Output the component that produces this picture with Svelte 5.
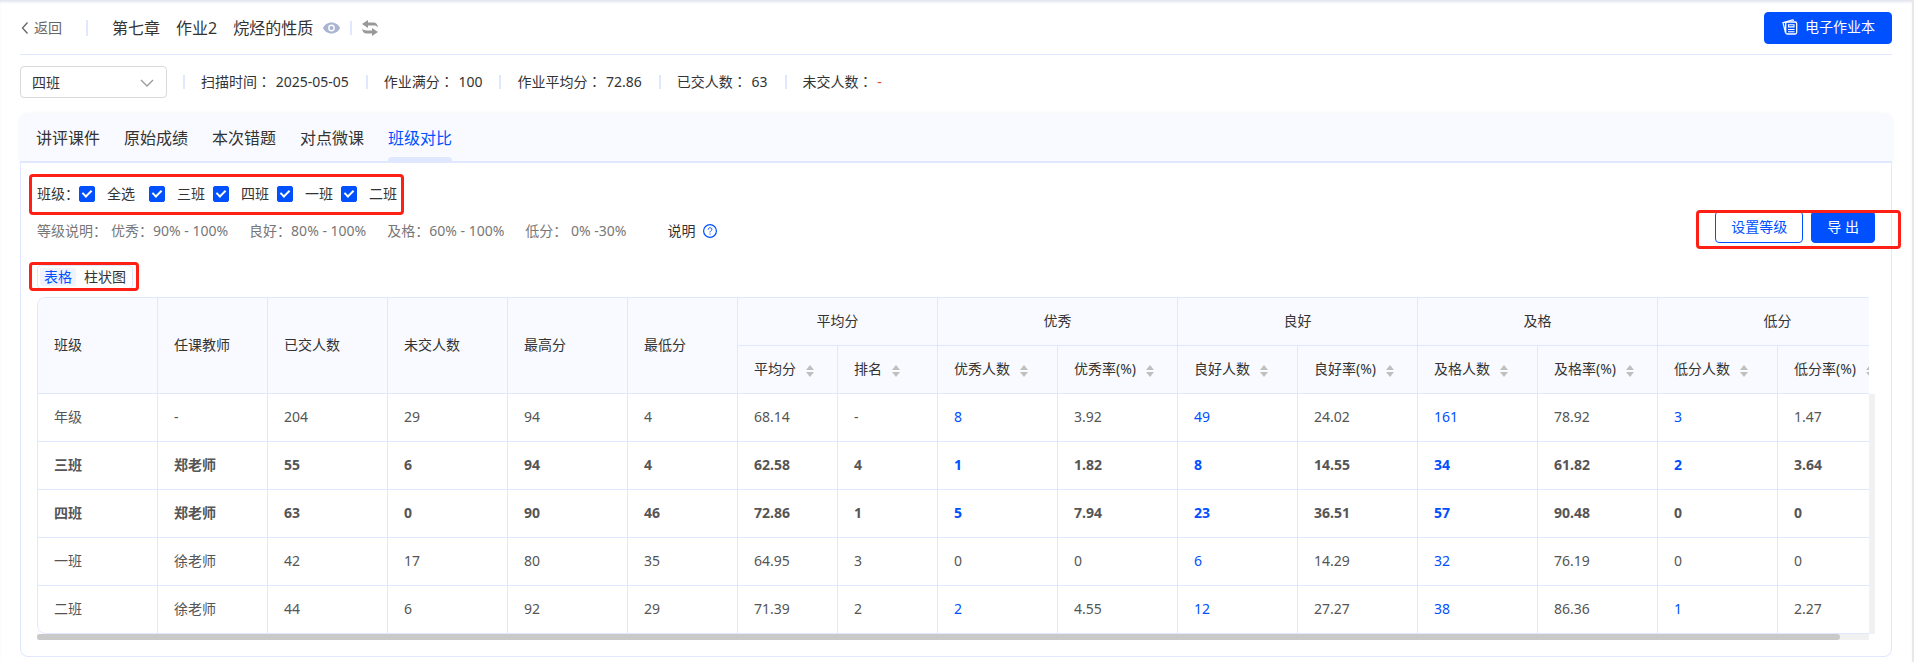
<script lang="ts">
  type Score = {
    name: string;
    teacher: string;
    values: string[];
    bold?: boolean;
  };

  const tabs = ["讲评课件", "原始成绩", "本次错题", "对点微课", "班级对比"];
  let activeTab = $state("班级对比");

  const classNames = ["三班", "四班", "一班", "二班"];
  let currentClass = $state("四班");
  let selected = $state(["三班", "四班", "一班", "二班"]);
  let allSelected = $derived(selected.length == classNames.length);

  let view = $state("表格");

  const info = [
    { label: "扫描时间", value: "2025-05-05" },
    { label: "作业满分", value: "100" },
    { label: "作业平均分", value: "72.86" },
    { label: "已交人数", value: "63" },
    { label: "未交人数", value: "-", warn: true },
  ];

  const levels = [
    "优秀：90% - 100%",
    "良好：80% - 100%",
    "及格：60% - 100%",
    "低分： 0% -30%",
  ];

  const widths = [
    120, 110, 120, 120, 120, 110, 100, 100, 120, 120, 120, 120, 120, 120, 120,
    120,
  ];
  const tableWidth = widths.reduce((sum, w) => sum + w, 1);
  const baseColumns = [
    "班级",
    "任课教师",
    "已交人数",
    "未交人数",
    "最高分",
    "最低分",
  ];
  const groups = [
    { title: "平均分", columns: ["平均分", "排名"] },
    { title: "优秀", columns: ["优秀人数", "优秀率(%)"] },
    { title: "良好", columns: ["良好人数", "良好率(%)"] },
    { title: "及格", columns: ["及格人数", "及格率(%)"] },
    { title: "低分", columns: ["低分人数", "低分率(%)"] },
  ];

  // columns that open the student list when the count is not 0
  const linkColumns = [6, 8, 10, 12];

  const rows: Score[] = [
    {
      name: "年级",
      teacher: "-",
      values: ["204", "29", "94", "4", "68.14", "-", "8", "3.92", "49", "24.02", "161", "78.92", "3", "1.47"],
    },
    {
      name: "三班",
      teacher: "郑老师",
      values: ["55", "6", "94", "4", "62.58", "4", "1", "1.82", "8", "14.55", "34", "61.82", "2", "3.64"],
      bold: true,
    },
    {
      name: "四班",
      teacher: "郑老师",
      values: ["63", "0", "90", "46", "72.86", "1", "5", "7.94", "23", "36.51", "57", "90.48", "0", "0"],
      bold: true,
    },
    {
      name: "一班",
      teacher: "徐老师",
      values: ["42", "17", "80", "35", "64.95", "3", "0", "0", "6", "14.29", "32", "76.19", "0", "0"],
    },
    {
      name: "二班",
      teacher: "徐老师",
      values: ["44", "6", "92", "29", "71.39", "2", "2", "4.55", "12", "27.27", "38", "86.36", "1", "2.27"],
    },
  ];

  let viewport = $state(0);
  let thumb = $derived(Math.min(100, (viewport / tableWidth) * 100));

  function toggleAll() {
    selected = allSelected ? [] : [...classNames];
  }
</script>

<div class="page">
  <header class="header">
    <a class="back" href="#back">
      <svg width="8" height="14" viewBox="0 0 8 14" fill="none" stroke="#666">
        <path d="M6.5 1.5 1.5 7l5 5.5" stroke-width="1.3" />
      </svg>
      返回
    </a>
    <i class="bar"></i>
    <h1 class="title">
      <span>第七章</span>
      <span>作业2</span>
      <span>烷烃的性质</span>
    </h1>
    <button class="icon-btn eye" aria-label="查看">
      <svg width="17" height="12" viewBox="0 0 17 12">
        <path
          d="M8.500.5C4.500.5 1.500 2.800 0 6c1.500 3.200 4.500 5.500 8.500 5.500s7-2.300 8.500-5.500C15.500 2.800 12.500.5 8.500.5z"
          fill="#a9b4d0"
        />
        <circle cx="8.500" cy="6" r="3.400" fill="#fff" />
        <circle cx="8.500" cy="6" r="2" fill="#a9b4d0" />
      </svg>
    </button>
    <i class="bar thin"></i>
    <button class="icon-btn" aria-label="切换">
      <svg width="16" height="16" viewBox="0 0 16 16">
        <g fill="#999">
          <path d="M6 0v2.500h5.500C14 2.500 15.600 4 15.800 7.200 14.500 5.900 13.500 5.500 11.500 5.500H6V8L0 4z" />
          <path d="M10 16v-2.500H4.500C2 13.500.4 12 .2 8.800 1.500 10.100 2.500 10.500 4.500 10.500H10V8l6 4z" />
        </g>
      </svg>
    </button>
    <button class="btn primary book">
      <svg width="16" height="16" viewBox="0 0 16 16" fill="none" stroke="#fff" stroke-width="1.300">
        <path d="M3.500 13.500 1 3.800 10.500.9l1.500.4" />
        <rect x="3.700" y="3" width="11" height="12" rx="1.500" />
        <path d="M6.500 5.700h5.500v2.200H6.500zM6 10.500h6.500M6 12.700h6.500" stroke-width="1.100" />
      </svg>
      电子作业本
    </button>
  </header>

  <div class="info">
    <div class="select">
      <select bind:value={currentClass} aria-label="选择班级">
        {#each classNames as name}
          <option value={name}>{name}</option>
        {/each}
      </select>
      <svg width="14" height="8" viewBox="0 0 14 8" fill="none" stroke="#999">
        <path d="M1 1l6 6 6-6" stroke-width="1.300" />
      </svg>
    </div>
    {#each info as item}
      <i class="bar short"></i>
      <span class="item">
        {item.label}<span class="colon">：</span>
        <span class="value" class:warn={item.warn}>{item.value}</span>
      </span>
    {/each}
  </div>

  <nav class="tabs">
    {#each tabs as tab}
      <button
        class="tab"
        class:active={activeTab == tab}
        onclick={() => (activeTab = tab)}>{tab}</button
      >
    {/each}
  </nav>

  <main class="panel">
    <div class="head">
      <div class="filters">
        <div class="classes marked">
          <span>班级：</span>
          <label class="all">
            <input type="checkbox" checked={allSelected} onchange={toggleAll} />
            全选
          </label>
          {#each classNames as name}
            <label>
              <input type="checkbox" value={name} bind:group={selected} />
              {name}
            </label>
          {/each}
        </div>
        <div class="levels">
          <span class="levels-title">等级说明：</span>
          {#each levels as level}
            <span class="level">{level}</span>
          {/each}
          <button class="help">
            说明
            <svg width="14" height="14" viewBox="0 0 14 14" fill="none" stroke="#0050ff">
              <circle cx="7" cy="7" r="6.400" stroke-width="1.200" />
              <path d="M5.200 5.600C5.200 3 9 3.200 8.900 5.400 8.900 6.700 7 6.800 7 8.400" />
              <path d="M7 9.500v1.200" />
            </svg>
          </button>
        </div>
      </div>
      <div class="actions marked">
        <button class="btn">设置等级</button>
        <button class="btn primary">导 出</button>
      </div>
    </div>

    <div class="switch marked">
      {#each ["表格", "柱状图"] as name}
        <button class:on={view == name} onclick={() => (view = name)}>{name}</button>
      {/each}
    </div>

    <div class="table-box">
      <div class="scroller" bind:clientWidth={viewport}>
        <table style="width: {tableWidth}px">
          <colgroup>
            {#each widths as w}
              <col style="width: {w}px" />
            {/each}
          </colgroup>
          <thead>
            <tr>
              {#each baseColumns as column}
                <th rowspan="2">{column}</th>
              {/each}
              {#each groups as group}
                <th class="group" colspan="2">{group.title}</th>
              {/each}
            </tr>
            <tr>
              {#each groups as group}
                {#each group.columns as column}
                  <th>
                    <button class="sort">
                      {column}
                      <svg width="8" height="12" viewBox="0 0 8 12" fill="#bfbfbf">
                        <path d="M4 0l4 5H0zM4 12l4-5H0z" />
                      </svg>
                    </button>
                  </th>
                {/each}
              {/each}
            </tr>
          </thead>
          <tbody>
            {#each rows as row}
              <tr class:bold={row.bold}>
                <td>{row.name}</td>
                <td>{row.teacher}</td>
                {#each row.values as value, i}
                  <td>
                    {#if linkColumns.includes(i) && value != "0"}
                      <a href="#students">{value}</a>
                    {:else}
                      {value}
                    {/if}
                  </td>
                {/each}
              </tr>
            {/each}
          </tbody>
        </table>
      </div>
      <div class="track-y"></div>
      <div class="track-x">
        <div class="thumb" style="width: {thumb}%"></div>
      </div>
    </div>
  </main>
</div>

<style>
  :global(body) {
    margin: 0;
    background: #fff;
  }

  .page {
    box-sizing: border-box;
    min-height: 100vh;
    padding: 0 20px 5px;
    border-right: 2px solid #e8e8e8;
    box-shadow: inset 0 3px 3px -1px #e2e4ec;
    color: #333;
    font-family: "Noto Sans", "Noto Sans CJK SC", sans-serif;
    font-size: 14px;
    line-height: 22px;
  }

  button,
  select {
    font: inherit;
    color: inherit;
  }

  button {
    margin: 0;
    padding: 0;
    border: none;
    background: none;
    white-space: nowrap;
    cursor: pointer;
  }

  a {
    color: #0050ff;
    text-decoration: none;
  }

  svg {
    display: block;
    flex: none;
  }

  .header {
    display: flex;
    align-items: center;
    height: 52px;
    padding-top: 2px;
    border-bottom: 1px solid #e0e8ff;
  }

  .back {
    display: flex;
    align-items: center;
    gap: 5px;
    padding-left: 1px;
    color: #666;
  }

  .bar {
    flex: none;
    width: 2px;
    height: 16px;
    margin: 0 24px;
    background: #e0e8ff;
  }

  .bar.thin {
    height: 14px;
    margin: 0 10px;
  }

  .bar.short {
    height: 14px;
    margin: 0 16px;
  }

  .title {
    display: flex;
    gap: 16px;
    margin: 0;
    font-size: 16px;
    font-weight: 400;
  }

  .eye {
    margin-left: 10px;
  }

  .book {
    display: flex;
    align-items: center;
    gap: 6px;
    margin-left: auto;
  }

  .btn {
    box-sizing: border-box;
    height: 32px;
    padding: 0 15px;
    border: 1px solid #0050ff;
    border-radius: 4px;
    background: #fff;
    color: #0050ff;
  }

  .btn.primary {
    background: #0050ff;
    color: #fff;
  }

  .btn.book {
    gap: 7px;
    padding: 0 16px 2px 17px;
  }

  .info {
    display: flex;
    align-items: center;
    margin: 11px 0 16px;
    white-space: nowrap;
  }

  .item {
    padding: 0 1px 2px 0;
  }

  .value {
    margin-left: 1px;
  }

  .select {
    position: relative;
  }

  .select select {
    display: block;
    box-sizing: border-box;
    width: 147px;
    height: 32px;
    padding: 2px 11px 0;
    border: 1px solid #d9d9d9;
    border-radius: 4px;
    background: #fff;
    appearance: none;
  }

  .select svg {
    position: absolute;
    top: 13px;
    right: 13px;
    pointer-events: none;
  }

  /* the traditional face centres the full-width colon */
  .colon {
    font-family: "Noto Sans CJK TC", sans-serif;
  }

  .warn {
    color: #e8492e;
  }

  .tabs {
    display: flex;
    gap: 24px;
    height: 47px;
    padding: 0 16px;
    border-bottom: 2px solid #e0e8ff;
    border-radius: 8px 8px 0 0;
    background: #f9faff;
    box-shadow: 0 0 4px #eef0f4;
  }

  .tab {
    position: relative;
    font-size: 16px;
  }

  .tab.active {
    color: #0050ff;
  }

  .tab.active::after {
    content: "";
    position: absolute;
    left: 0;
    right: 0;
    bottom: 0;
    height: 4px;
    border-radius: 4px 4px 0 0;
    background: #e0e8ff;
  }

  .panel {
    position: relative;
    padding: 20px 16px 16px;
    border: 1px solid #e0e8ff;
    border-top: none;
    border-radius: 0 0 8px 8px;
    background: #fff;
  }

  .head {
    display: flex;
    justify-content: space-between;
    align-items: flex-end;
  }

  .filters {
    display: flex;
    flex-direction: column;
    align-items: flex-start;
    gap: 14px;
  }

  .marked {
    position: relative;
  }

  .marked::after {
    content: "";
    position: absolute;
    inset: -9px -7px -10px -8px;
    border: 3px solid #ff2015;
    border-radius: 4px;
    pointer-events: none;
  }

  .actions.marked::after {
    inset: -1px -26px -6px -19px;
  }

  .switch.marked::after {
    inset: -4px -7px -3px -9px;
  }

  .classes {
    display: flex;
    gap: 8px;
  }

  .classes > span {
    margin-right: -8px;
  }

  .classes label {
    display: flex;
    align-items: center;
    gap: 12px;
  }

  .classes .all {
    margin-right: 6px;
  }

  input[type="checkbox"] {
    width: 16px;
    height: 16px;
    margin: 0;
    border: 1px solid #0050ff;
    border-radius: 2px;
    appearance: none;
    display: grid;
    place-items: center;
  }

  input[type="checkbox"]:checked {
    background: #0050ff;
  }

  input[type="checkbox"]:checked::before {
    content: "";
    width: 4px;
    height: 7px;
    margin-bottom: 3px;
    border: solid #fff;
    border-width: 0 2px 2px 0;
    transform: rotate(45deg);
  }

  .levels {
    display: flex;
    align-items: center;
    gap: 21px;
    height: 24px;
    color: #777;
    white-space: pre;
  }

  .levels-title {
    margin-right: -17px;
  }

  .help {
    display: flex;
    align-items: center;
    gap: 8px;
    margin-left: 20px;
    color: #333;
  }

  .actions {
    display: flex;
    gap: 8px;
  }

  .switch {
    display: flex;
    gap: 4px;
    box-sizing: border-box;
    width: max-content;
    height: 24px;
    margin: 22px 0 8px;
    padding: 2px;
    border: 1px solid #e0e8ff;
    border-radius: 4px;
  }

  .switch button {
    padding: 0 4px;
    border-radius: 2px;
    line-height: 18px;
  }

  .switch .on {
    background: #eef3ff;
    color: #0050ff;
  }

  .table-box {
    display: grid;
    grid-template-columns: minmax(0, 1fr) 6px;
  }

  .scroller {
    overflow: hidden;
    border-radius: 8px 0 0 8px;
  }

  table {
    table-layout: fixed;
    border: solid #e0e8ff;
    border-width: 1px 0 0 1px;
    border-radius: 8px 0 0 8px;
    border-spacing: 0;
  }

  th,
  td {
    box-sizing: border-box;
    height: 48px;
    padding: 0 16px 2px;
    border: solid #e0e8ff;
    border-width: 0 1px 1px 0;
    text-align: left;
    white-space: nowrap;
  }

  th {
    background: #f9faff;
    font-weight: 400;
  }

  thead tr:first-child th:first-child {
    border-top-left-radius: 8px;
  }

  tbody tr:last-child td:first-child {
    border-bottom-left-radius: 8px;
  }

  th.group {
    text-align: center;
  }

  .sort {
    display: flex;
    align-items: center;
    gap: 10px;
  }

  .sort svg {
    margin-top: 4px;
  }

  td {
    color: #555;
  }

  .bold td {
    font-weight: 700;
  }

  .track-y {
    margin-top: 97px;
    background: #f1f1f1;
  }

  .track-x {
    height: 6px;
    background: #f1f1f1;
  }

  .thumb {
    height: 6px;
    border-radius: 3px;
    background: #c9c9c9;
  }
</style>
